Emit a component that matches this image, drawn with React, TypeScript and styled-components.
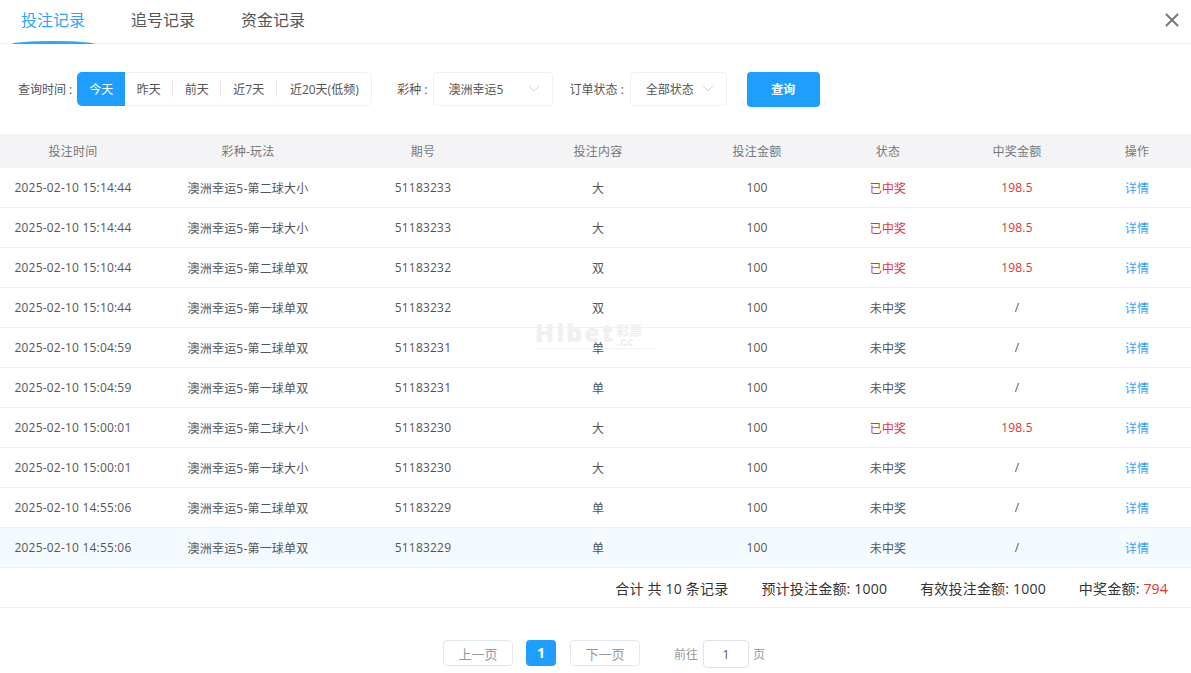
import React from 'react'
import styled, {createGlobalStyle} from 'styled-components'

const GlobalStyle = createGlobalStyle`
    html, body {
        margin: 0;
        padding: 0;
        background: #fff;
        font-family: "Open Sans", "Noto Sans CJK SC", sans-serif;
    }
    * {
        box-sizing: border-box;
    }
`

const Page = styled.div`
    position: relative;
    width: 1191px;
    height: 673px;
    overflow: hidden;
    background: #fff;
`

const TabBar = styled.div`
    display: flex;
    height: 44px;
    padding-left: 12px;
    border-bottom: 1px solid #f1f1f3;
`

const Tab = styled.div<{$active?: boolean}>`
    position: relative;
    width: 82px;
    margin-right: 28px;
    height: 43px;
    padding-top: 9px;
    text-align: center;
    font-size: 16px;
    line-height: 22px;
    color: ${p => (p.$active ? '#2ea4ff' : '#555')};

    ${p =>
        p.$active &&
        `&::after {
            content: '';
            position: absolute;
            left: 0;
            right: 0;
            bottom: -1px;
            height: 3px;
            border-radius: 50% 50% 0 0 / 100% 100% 0 0;
            background: #2ea4ff;
        }`}
`

const CloseButton = styled.div`
    position: absolute;
    top: 11px;
    right: 11px;
    width: 16px;
    height: 16px;
    color: #777;
`

const Filters = styled.div`
    display: flex;
    align-items: center;
    height: 90px;
    padding-left: 18px;
    font-size: 12px;
    color: #555;
`

const FilterLabel = styled.span<{$gap?: number}>`
    margin-left: ${p => p.$gap || 0}px;
    white-space: nowrap;
`

const RangeGroup = styled.div`
    display: flex;
    align-items: center;
    height: 34px;
    margin-left: 5px;
    margin-right: 25px;
    border: 1px solid #f0f0f2;
    border-radius: 6px;
`

const RangeItem = styled.div<{$active?: boolean; $width: number}>`
    position: relative;
    display: flex;
    align-items: center;
    justify-content: center;
    width: ${p => p.$width}px;
    height: 34px;
    margin: ${p => (p.$active ? '-1px 0 -1px -1px' : '0')};
    border-radius: ${p => (p.$active ? '5px 0 0 5px' : '0')};
    background: ${p => (p.$active ? '#1e9fff' : 'transparent')};
    color: ${p => (p.$active ? '#fff' : '#555')};
`

const RangeDivider = styled.span`
    width: 1px;
    height: 16px;
    background: #e8e8ea;
`

const SelectBox = styled.div<{$width: number; $gap: number}>`
    position: relative;
    display: flex;
    align-items: center;
    width: ${p => p.$width}px;
    height: 34px;
    margin-left: ${p => p.$gap}px;
    padding-left: 15px;
    border: 1px solid #f0f0f2;
    border-radius: 4px;
    color: #555;
`

const Chevron = styled.svg`
    position: absolute;
    top: 12px;
    right: 12px;
    width: 12px;
    height: 8px;
    color: #d3d5da;
`

const SearchButton = styled.button`
    width: 73px;
    height: 35px;
    margin-left: 20px;
    border: 0;
    border-radius: 4px;
    background: #1e9fff;
    color: #fff;
    font: inherit;
    font-weight: 600;
`

const TableRow = styled.div<{$head?: boolean; $hover?: boolean}>`
    display: grid;
    grid-template-columns: 157px 182px 168px 182px 136px 126px 132px 108px;
    align-items: center;
    height: ${p => (p.$head ? '34px' : '40px')};
    border-bottom: 1px solid #f1f1f3;
    font-size: 12px;
    letter-spacing: 0.2px;
    color: ${p => (p.$head ? '#777' : '#555')};
    background: ${p => (p.$head ? '#f4f4f6' : p.$hover ? '#f5fafe' : '#fff')};
`

const Cell = styled.div<{$tone?: 'win' | 'link'}>`
    text-align: center;
    white-space: nowrap;
    color: ${p => (p.$tone === 'win' ? '#e5352b' : p.$tone === 'link' ? '#2ea4ff' : 'inherit')};

    &:first-child {
        padding-right: 11px;
    }
`

const Summary = styled.div`
    display: flex;
    justify-content: flex-end;
    align-items: center;
    gap: 33px;
    height: 40px;
    padding-right: 23px;
    border-bottom: 1px solid #eeeff3;
    font-size: 14px;
    letter-spacing: 0.2px;
    color: #333;
`

const Red = styled.span`
    color: #e5352b;
`

const Pagination = styled.div`
    display: flex;
    align-items: flex-start;
    padding: 32px 0 0 443px;
    font-size: 13px;
    color: #999;
`

const PageButton = styled.div`
    display: flex;
    align-items: center;
    justify-content: center;
    width: 70px;
    height: 26px;
    border: 1px solid #e4e7ed;
    border-radius: 4px;
`

const PageNumber = styled.div`
    display: flex;
    align-items: center;
    justify-content: center;
    width: 30px;
    height: 26px;
    margin: 0 14px 0 13px;
    padding-bottom: 2px;
    border-radius: 4px;
    background: #1e9fff;
    color: #fff;
    font-weight: 700;
    font-size: 14px;
`

const Jump = styled.div`
    display: flex;
    align-items: center;
    height: 28px;
    margin-left: 34px;
    font-size: 12px;
`

const JumpInput = styled.div`
    display: flex;
    align-items: center;
    justify-content: center;
    width: 46px;
    height: 28px;
    margin: 0 4px 0 5px;
    border: 1px solid #dfe2e8;
    border-radius: 4px;
    color: #666;
    font-size: 13px;
`

const Watermark = styled.div`
    position: absolute;
    left: 535px;
    top: 325px;
    display: flex;
    width: 120px;
    height: 24px;
    border-bottom: 1px solid #f3f3f3;
    pointer-events: none;
`

const WatermarkWord = styled.span`
    height: 15px;
    color: #f0f0f0;
    font-size: 25px;
    font-weight: 800;
    line-height: 15px;
    letter-spacing: 2px;
`

const WatermarkMark = styled.span`
    display: block;
    width: 27px;
    margin-left: 1px;
    color: #eeeeee;
    font-size: 13px;
    font-weight: 700;
    line-height: 11px;
`

type Row = [string, string, string, string, string, string]

const rows: Row[] = [
    ['2025-02-10 15:14:44', '澳洲幸运5-第二球大小', '51183233', '大', '已中奖', '198.5'],
    ['2025-02-10 15:14:44', '澳洲幸运5-第一球大小', '51183233', '大', '已中奖', '198.5'],
    ['2025-02-10 15:10:44', '澳洲幸运5-第二球单双', '51183232', '双', '已中奖', '198.5'],
    ['2025-02-10 15:10:44', '澳洲幸运5-第一球单双', '51183232', '双', '未中奖', '/'],
    ['2025-02-10 15:04:59', '澳洲幸运5-第二球单双', '51183231', '单', '未中奖', '/'],
    ['2025-02-10 15:04:59', '澳洲幸运5-第一球单双', '51183231', '单', '未中奖', '/'],
    ['2025-02-10 15:00:01', '澳洲幸运5-第二球大小', '51183230', '大', '已中奖', '198.5'],
    ['2025-02-10 15:00:01', '澳洲幸运5-第一球大小', '51183230', '大', '未中奖', '/'],
    ['2025-02-10 14:55:06', '澳洲幸运5-第二球单双', '51183229', '单', '未中奖', '/'],
    ['2025-02-10 14:55:06', '澳洲幸运5-第一球单双', '51183229', '单', '未中奖', '/'],
]

const headers = ['投注时间', '彩种-玩法', '期号', '投注内容', '投注金额', '状态', '中奖金额', '操作']

const ChevronIcon = () => (
    <Chevron viewBox="0 0 12 8" fill="none" stroke="currentColor" strokeWidth="1">
        <path d="M1 1l5 5 5-5" />
    </Chevron>
)

export default function App() {
    return (
        <Page>
            <GlobalStyle />
            <TabBar>
                <Tab $active>投注记录</Tab>
                <Tab>追号记录</Tab>
                <Tab>资金记录</Tab>
            </TabBar>
            <CloseButton>
                <svg viewBox="0 0 16 16" fill="none" stroke="currentColor" strokeWidth="2">
                    <path d="M2 2l12 12M14 2L2 14" />
                </svg>
            </CloseButton>

            <Filters>
                <FilterLabel>查询时间 :</FilterLabel>
                <RangeGroup>
                    <RangeItem $active $width={48}>今天</RangeItem>
                    <RangeItem $width={47}>昨天</RangeItem>
                    <RangeDivider />
                    <RangeItem $width={47}>前天</RangeItem>
                    <RangeDivider />
                    <RangeItem $width={55}>近7天</RangeItem>
                    <RangeDivider />
                    <RangeItem $width={94}>近20天(低频)</RangeItem>
                </RangeGroup>
                <FilterLabel>彩种 :</FilterLabel>
                <SelectBox $width={120} $gap={5}>
                    澳洲幸运5
                    <ChevronIcon />
                </SelectBox>
                <FilterLabel $gap={17}>订单状态 :</FilterLabel>
                <SelectBox $width={97} $gap={6}>
                    全部状态
                    <ChevronIcon />
                </SelectBox>
                <SearchButton>查询</SearchButton>
            </Filters>

            <TableRow $head>
                {headers.map(h => (
                    <Cell key={h}>{h}</Cell>
                ))}
            </TableRow>
            {rows.map((r, i) => {
                const won = r[4] === '已中奖'
                return (
                    <TableRow key={i} $hover={i === rows.length - 1}>
                        <Cell>{r[0]}</Cell>
                        <Cell>{r[1]}</Cell>
                        <Cell>{r[2]}</Cell>
                        <Cell>{r[3]}</Cell>
                        <Cell>100</Cell>
                        <Cell $tone={won ? 'win' : undefined}>{r[4]}</Cell>
                        <Cell $tone={won ? 'win' : undefined}>{r[5]}</Cell>
                        <Cell $tone="link">详情</Cell>
                    </TableRow>
                )
            })}

            <Summary>
                <span>合计 共 10 条记录</span>
                <span>预计投注金额: 1000</span>
                <span>有效投注金额: 1000</span>
                <span>
                    中奖金额: <Red>794</Red>
                </span>
            </Summary>

            <Pagination>
                <PageButton>上一页</PageButton>
                <PageNumber>1</PageNumber>
                <PageButton>下一页</PageButton>
                <Jump>
                    前往
                    <JumpInput>1</JumpInput>
                    页
                </Jump>
            </Pagination>

            <Watermark>
                <WatermarkWord>Hibet</WatermarkWord>
                <WatermarkMark>彩票 .cc</WatermarkMark>
            </Watermark>
        </Page>
    )
}
